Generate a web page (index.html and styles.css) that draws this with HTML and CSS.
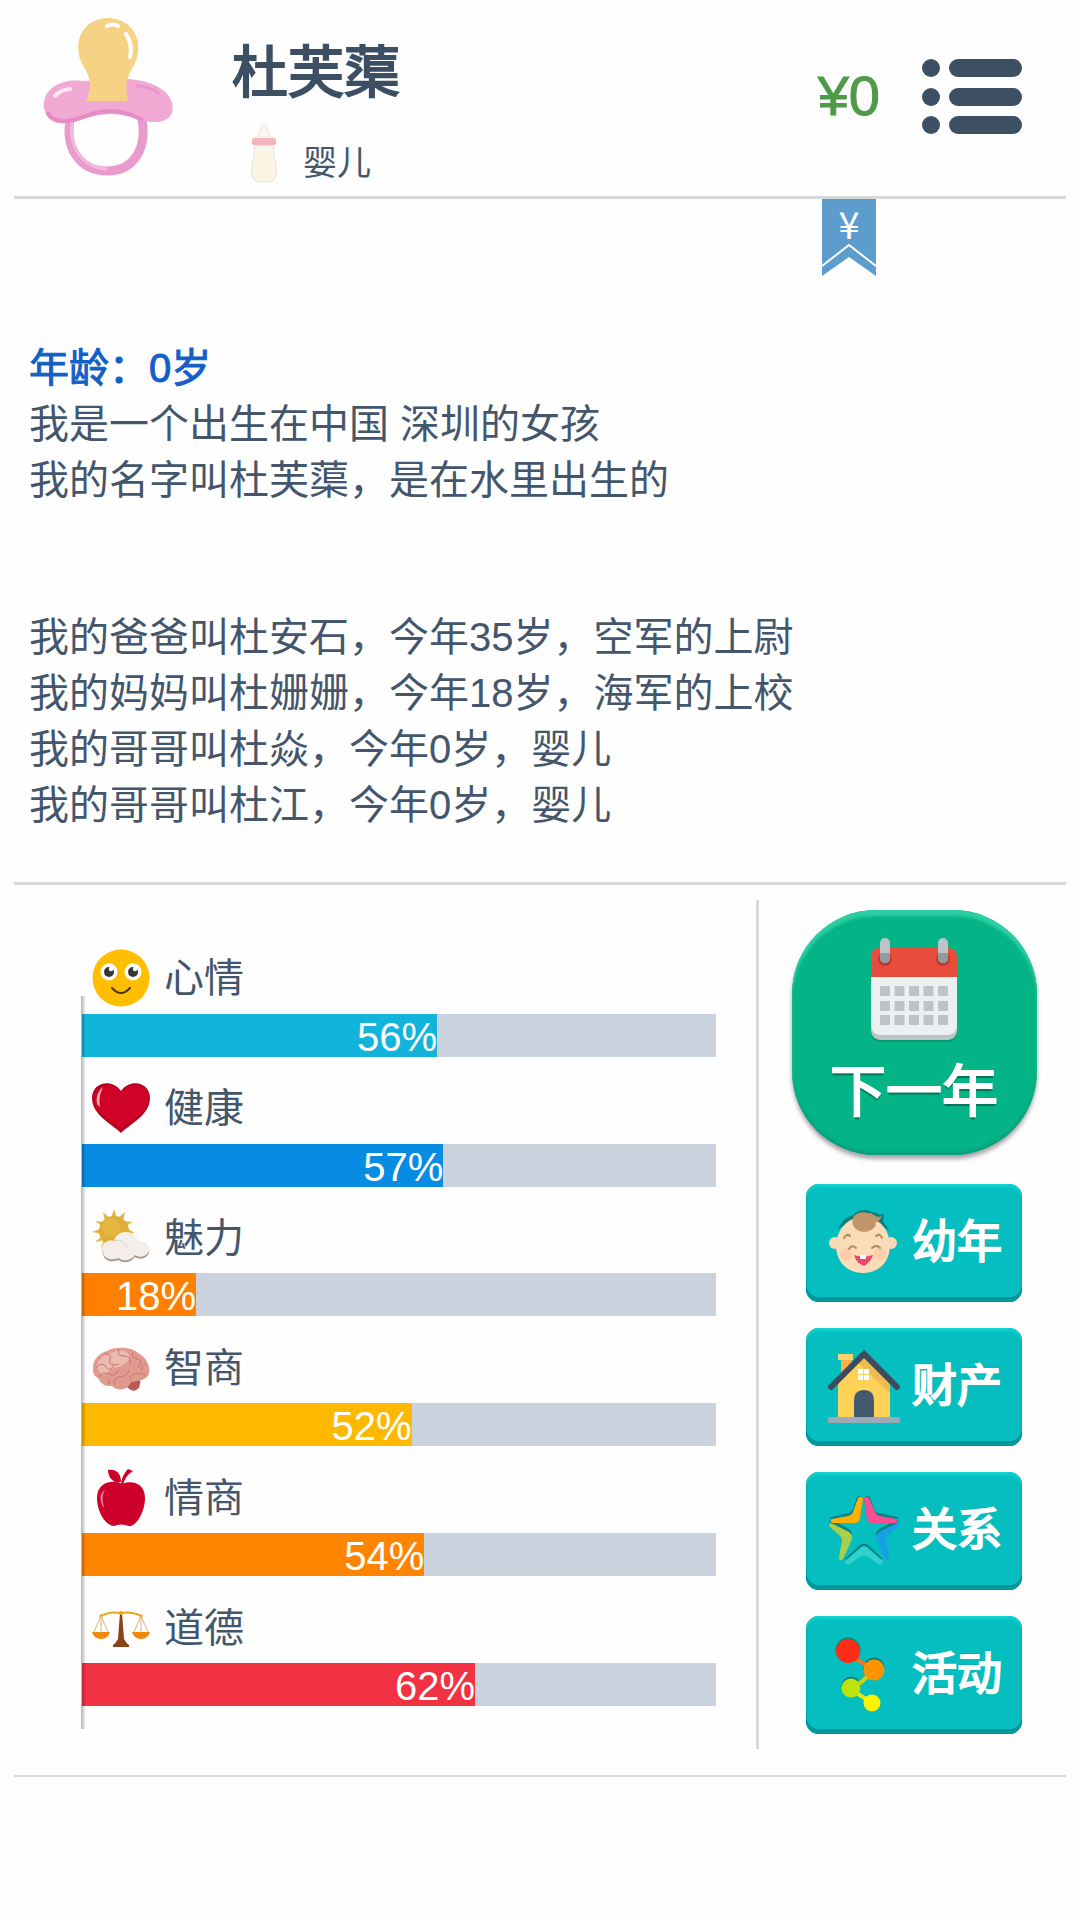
FILE: index.html
```html
<!DOCTYPE html>
<html lang="zh-CN">
<head>
    <meta charset="utf-8">
    <meta name="viewport" content="width=device-width, initial-scale=1">
    <title>杜芙蕖</title>
    <link rel="stylesheet" href="styles.css">
</head>
<body>
    <header class="top">
        <svg class="avatar" viewBox="0 0 132 158" aria-hidden="true">
            <path d="M28 98C20 132 38 154 64 154S106 132 98 98" fill="none" stroke="#e99bcb" stroke-width="9"/>
            <path d="M30 101C23 130 41 151 64 152" fill="none" stroke="#f2b9da" stroke-width="3"/>
            <path d="M40 64C22 61 3 69 1 85C-2 100 16 107 34 104C48 100 56 97 68 97C84 97 94 103 108 105C125 106 132 98 129 86C126 73 108 63 84 62Z" fill="#efa9d2"/>
            <path d="M4 95C9 105 20 106 34 102C48 97 56 94 68 94C84 94 92 100 100 103" fill="none" stroke="#e68bc4" stroke-width="4"/>
            <path d="M43 84C50 68 46 59 42 52C29 33 34 2 65 1C94 2 102 30 90 50C83 63 82 68 85 84Z" fill="#f5d284"/>
            <path d="M64 9Q70 6 75 9M83 17Q90 27 87 40" fill="none" stroke="#fff" stroke-width="4" stroke-linecap="round"/>
            <path d="M12 79Q17 73 27 72" fill="none" stroke="#fbe6f3" stroke-width="4" stroke-linecap="round"/>
            <path d="M94 69Q106 69 115 76" fill="none" stroke="#e899cb" stroke-width="3" stroke-linecap="round"/>
        </svg>
        <div class="who">
            <h1 class="name">杜芙蕖</h1>
            <div class="stage">
                <svg class="bottle" viewBox="0 0 26 58" aria-hidden="true">
                    <path d="M10 1Q13-1 16 1L17 7L22 14H4L9 7Z" fill="#faf5f0" stroke="#ece4dd"/>
                    <path d="M3 20C5 31-2 44 2 53Q4 57 13 57T24 53C28 44 21 31 23 20Z" fill="#fbf5ec" stroke="#e9dfd5"/>
                    <path d="M5 26H21C20 36 25 46 22 52Q13 56 4 52C1 46 6 36 5 26Z" fill="#fcf3e2"/>
                    <rect x="1" y="13" width="24" height="7" rx="2" fill="#f5b5be"/>
                </svg>
                <span>婴儿</span>
            </div>
        </div>
        <div class="money">¥0</div>
        <button class="menu" type="button" aria-label="菜单">
            <svg viewBox="0 0 100 75" fill="#3d4f63">
                <circle cx="9" cy="9" r="9"/><rect x="27" width="73" height="18" rx="9"/>
                <circle cx="9" cy="38" r="9"/><rect x="27" y="29" width="73" height="18" rx="9"/>
                <circle cx="9" cy="66" r="9"/><rect x="27" y="57" width="73" height="18" rx="9"/>
            </svg>
        </button>
    </header>

    <main class="story">
        <button class="ribbon" type="button" aria-label="资金">
            <svg viewBox="0 0 54 77">
                <path d="M0 0H54V77L27 58L0 77Z" fill="#5d9dcd"/>
                <path d="M0 67L27 46L54 67" fill="none" stroke="#fff" stroke-width="2"/>
            </svg>
            <span>¥</span>
        </button>
        <h2 class="age">年龄：0岁</h2>
        <p>我是一个出生在中国 深圳的女孩</p>
        <p>我的名字叫杜芙蕖，是在水里出生的</p>
        <div class="family">
            <p>我的爸爸叫杜安石，今年35岁，空军的上尉</p>
            <p>我的妈妈叫杜姗姗，今年18岁，海军的上校</p>
            <p>我的哥哥叫杜焱，今年0岁，婴儿</p>
            <p>我的哥哥叫杜江，今年0岁，婴儿</p>
        </div>
    </main>

    <section class="panel">
        <ul class="stats">
            <li class="stat">
                <div class="label">
                    <svg viewBox="0 0 58 58" aria-hidden="true">
                        <circle cx="29" cy="29" r="28.5" fill="#ffbe00"/>
                        <circle cx="17" cy="23" r="8.5" fill="#fff"/><circle cx="41" cy="23" r="8.5" fill="#fff"/>
                        <circle cx="17" cy="23" r="5" fill="#3a3532"/><circle cx="41" cy="23" r="5" fill="#3a3532"/>
                        <circle cx="19" cy="20" r="2.2" fill="#fff"/><circle cx="43" cy="20" r="2.2" fill="#fff"/>
                        <path d="M20 39Q29 49 38 39" fill="none" stroke="#4b3517" stroke-width="2" stroke-linecap="round"/>
                    </svg>
                    <span>心情</span>
                </div>
                <div class="track"><div class="fill sky" style="width:56%">56%</div></div>
            </li>
            <li class="stat">
                <div class="label">
                    <svg viewBox="0 0 58 58" aria-hidden="true">
                        <path d="M29 54C20 45 0 36 0 19C0 3 20-1 29 12C38-1 58 3 58 19C58 36 38 45 29 54Z" fill="#b80222"/>
                        <path d="M29 50C20 41 2 34 2 19C2 6 21 2 29 14C37 2 56 6 56 19C56 34 38 41 29 50Z" fill="#cf0327"/>
                        <path d="M5 25Q3 14 11 8Q6 18 8 28Z" fill="#eeb0b9"/>
                    </svg>
                    <span>健康</span>
                </div>
                <div class="track"><div class="fill blue" style="width:57%">57%</div></div>
            </li>
            <li class="stat">
                <div class="label">
                    <svg viewBox="0 0 58 58" aria-hidden="true">
                        <path d="M22 0L25 9H19ZM33 3L31 12L26 9ZM41 13L34 17L31 12ZM43 24L34 25V19ZM11 3L18 9L13 12ZM3 12L13 13L10 17ZM0 23L10 19V25ZM3 33L10 27L13 31ZM9 39L12 30L17 33Z" fill="#e2b84a"/>
                        <circle cx="22" cy="22" r="15" fill="#dfae36"/>
                        <circle cx="19" cy="18" r="9" fill="#ebc04a" opacity=".5"/>
                        <path d="M11 45C8 38 14 31 22 33C24 22 42 20 46 33C54 32 60 40 56 46C52 51 46 50 43 48C38 55 30 54 27 51C20 54 12 52 11 45Z" fill="#a99a93"/>
                        <path d="M11 43C8 36 14 30 22 32C24 21 42 19 46 32C54 31 60 39 56 44C52 49 46 48 43 46C38 53 30 52 27 49C20 52 12 50 11 43Z" fill="#f3eeea"/>
                        <path d="M22 32Q31 29 36 39" fill="none" stroke="#ded5cf"/>
                    </svg>
                    <span>魅力</span>
                </div>
                <div class="track"><div class="fill orange" style="width:18%">18%</div></div>
            </li>
            <li class="stat">
                <div class="label">
                    <svg viewBox="0 0 58 58" aria-hidden="true">
                        <path d="M32 42L48 38Q50 50 42 52Q34 50 32 42Z" fill="#b95a50"/>
                        <path d="M1 31C0 20 8 14 15 12C24 7 40 8 46 14C54 18 59 27 57 35C54 42 45 42 39 43C36 51 26 53 20 47C10 48 8 42 6 39Q1 37 1 31Z" fill="#e09a90"/>
                        <path d="M5 28C5 20 14 14 22 13C32 9 40 14 36 22C30 30 20 27 16 33S7 34 5 28Z" fill="#edbab1"/>
                        <path d="M4 29Q10 22 14 28T22 26M13 15Q20 14 18 21T27 25M27 10Q24 17 32 17T38 25M41 13Q38 18 45 20T46 29M54 25Q49 26 50 32M8 38Q10 32 17 35T26 31M23 46Q20 39 28 38T37 31M39 42Q36 37 42 35T54 36M17 45Q19 42 15 40" fill="none" stroke="#c4776c"/>
                    </svg>
                    <span>智商</span>
                </div>
                <div class="track"><div class="fill amber" style="width:52%">52%</div></div>
            </li>
            <li class="stat">
                <div class="label">
                    <svg viewBox="0 0 58 58" aria-hidden="true">
                        <path d="M30 15C38 11 53 13 53 29C53 43 44 58 37 57Q29 54 22 57C14 57 5 43 5 29C5 13 21 10 30 15Z" fill="#cd002b"/>
                        <path d="M16 1C25 0 29 5 29 13C22 15 16 9 16 1ZM29 15Q30 6 36 0L41 2Q33 7 31 16Z" fill="#cd002b"/>
                        <path d="M11 38Q5 26 13 21Q9 28 12 38Z" fill="#e67488"/>
                    </svg>
                    <span>情商</span>
                </div>
                <div class="track"><div class="fill tangerine" style="width:54%">54%</div></div>
            </li>
            <li class="stat">
                <div class="label">
                    <svg viewBox="0 0 58 58" aria-hidden="true">
                        <path d="M28 14H30L32 40Q34 44 37 46V48H21V46Q24 44 26 40Z" fill="#8b4117"/>
                        <path d="M9 17Q18 12 29 14Q40 12 49 17" fill="none" stroke="#eba51b" stroke-width="2"/>
                        <circle cx="29" cy="14" r="2" fill="#eba51b"/><circle cx="9" cy="17" r="1.8" fill="#eba51b"/><circle cx="49" cy="17" r="1.8" fill="#eba51b"/>
                        <path d="M9 17V33M9 17L2 33M9 17L16 33M49 17V33M49 17L42 33M49 17L56 33" stroke="#dcb27e"/>
                        <path d="M0 33H18Q16 40 9 40T0 33ZM40 33H58Q56 40 49 40T40 33Z" fill="#ee8a0b"/>
                    </svg>
                    <span>道德</span>
                </div>
                <div class="track"><div class="fill red" style="width:62%">62%</div></div>
            </li>
        </ul>

        <nav class="actions">
            <button class="next" type="button">
                <svg viewBox="0 0 88 104" aria-hidden="true">
                    <rect x="1" y="14" width="86" height="90" rx="9" fill="#05875f" opacity=".6"/>
                    <rect x="1" y="20" width="86" height="82" rx="9" fill="#bdc3c7"/>
                    <rect x="1" y="14" width="86" height="83" rx="9" fill="#ecf0f1"/>
                    <path d="M1 39V19Q1 10 10 10H78Q87 10 87 19V39Z" fill="#e84c3d"/>
                    <circle cx="15" cy="21" r="7" fill="#bf3a2c"/><circle cx="73" cy="21" r="7" fill="#bf3a2c"/>
                    <rect x="10" width="10" height="25" rx="5" fill="#bdc3c7"/><rect x="68" width="10" height="25" rx="5" fill="#bdc3c7"/>
                    <path d="M10 15H20V20Q20 25 15 25T10 20ZM68 15H78V20Q78 25 73 25T68 20Z" fill="#8f9b9c"/>
                    <path d="M10 53H78M10 68H78M10 82H78" stroke="#bdc3c7" stroke-width="10" stroke-dasharray="10 4.5"/>
                </svg>
                <span>下一年</span>
            </button>
            <button class="action" type="button">
                <svg viewBox="0 0 72 72" aria-hidden="true">
                    <path d="M10 22C15 12 22 8 25 9C27 3 38 2 45 5C50 6 50 9 56 7L55 15L62 24L50 16H20Z" fill="#0a7d76"/>
                    <circle cx="7" cy="36" r="6" fill="#fbd9b4"/><circle cx="63" cy="36" r="6" fill="#fbd9b4"/>
                    <path d="M35 10C52 10 61 23 62 38C62 56 50 66 35 66S8 56 8 38C9 23 19 10 35 10Z" fill="#fbdcb8"/>
                    <circle cx="18" cy="47" r="6" fill="#fbcdaa"/><circle cx="52" cy="47" r="6" fill="#fbcdaa"/>
                    <path d="M25 18C22 8 31 3 40 6C48 6 46 12 54 9C51 16 45 15 48 18C42 28 28 26 25 18Z" fill="#c1946a"/>
                    <path d="M16 31Q19 26 22 29M48 29Q52 26 54 31M21 42Q24 37 28 41M44 41Q49 37 52 41" fill="none" stroke="#b38a5e" stroke-width="2" stroke-linecap="round"/>
                    <path d="M26 48Q35 51 45 48Q43 55 36 59Q28 56 26 48Z" fill="#e9486b"/>
                    <path d="M32 48H38V52H32Z" fill="#fff"/>
                </svg>
                <span>幼年</span>
            </button>
            <button class="action" type="button">
                <svg viewBox="0 0 72 72" aria-hidden="true">
                    <path d="M13 8H24V28H13Z" fill="#f5b04c"/><path d="M10 3H25V9H10Z" fill="#fed069"/>
                    <path d="M10 32L36 6L62 32V66H10Z" fill="#fed159"/><path d="M36 6L62 32V42L30 12Z" fill="#edbc51"/>
                    <path d="M3 36L36 3L69 36" fill="none" stroke="#3d4b5c" stroke-width="6" stroke-linecap="round"/>
                    <path d="M26 66V50Q26 39 36 39T46 50V66Z" fill="#435b6f"/>
                    <path d="M30 18H35V23H30ZM36 18H41V23H36ZM30 24H35V29H30ZM36 24H41V29H36Z" fill="#fff"/>
                    <path d="M0 66H72V72H0Z" fill="#9aaab7"/>
                </svg>
                <span>财产</span>
            </button>
            <button class="action" type="button">
                <svg viewBox="0 0 72 72" aria-hidden="true">
                    <g id="star-shade" fill="#078386">
                        <path d="M29 2Q34-1 35 4L32 24H4Q0 24 3 22L20 18Q24 17 25 14Z"/>
                        <path d="M42 2Q37-1 36 4L39 24H68Q72 24 69 22L51 18Q47 17 46 14Z"/>
                        <path d="M1 26L4 25L21 34Q25 37 24 40L22 45L12 38Z"/>
                        <path d="M71 26L68 25L51 34Q47 37 48 40L50 45L60 38Z"/>
                        <path d="M17 64L32 50Q36 47 40 50L55 64L48 66L36 56L24 66Z"/>
                    </g>
                    <path d="M30 3Q34 0 35 4L32 24Q31 28 27 28H5Q1 27 4 24L20 21Q24 20 25 17Z" fill="#ffb003"/>
                    <path d="M41 3Q37 0 36 4L39 24Q40 28 44 28H67Q71 27 68 24L52 21Q48 20 47 17Z" fill="#fb4d91"/>
                    <path d="M1 31Q1 27 5 29L21 37Q25 40 24 44L15 64Q11 67 11 62L14 46Q14 42 11 40Z" fill="#a9cf4b"/>
                    <path d="M71 31Q71 27 67 29L51 37Q47 40 48 44L57 64Q61 67 61 62L58 46Q58 42 61 40Z" fill="#179fe2"/>
                    <path d="M17 66L32 53Q36 49 40 53L55 66Q54 70 50 69L40 62Q36 59 32 62L22 69Q17 71 17 66Z" fill="#2ed1cb"/>
                </svg>
                <span>关系</span>
            </button>
            <button class="action" type="button">
                <svg viewBox="0 0 72 72" aria-hidden="true">
                    <circle cx="20" cy="11" r="12.5" fill="#0a8174"/><circle cx="46" cy="29" r="10.5" fill="#0a8174"/><circle cx="23" cy="47" r="9.5" fill="#0a8174"/>
                    <path d="M26 18Q34 24 46 31" fill="none" stroke="#fe721a" stroke-width="4"/><path d="M43 33Q35 44 23 49" fill="none" stroke="#c7d605" stroke-width="4"/><path d="M24 51L44 64" stroke="#e4ee05" stroke-width="4"/>
                    <circle cx="20" cy="12" r="12" fill="#fe2c18"/><circle cx="46" cy="31" r="10.5" fill="#ff9400"/>
                    <circle cx="23" cy="49" r="9.5" fill="#bce30c"/><circle cx="44" cy="64" r="8.5" fill="#fff400"/>
                </svg>
                <span>活动</span>
            </button>
        </nav>
    </section>
</body>
</html>
```
FILE: styles.css
```css
* {
    box-sizing: border-box;
    margin: 0;
    padding: 0;
}
body {
    margin: 0 14px;
    background: #fefefe;
    color: #44566c;
    font-family: "Liberation Sans", "Noto Sans CJK SC", sans-serif;
    font-size: 40px;
    line-height: 56px;
}
button {
    border: 0;
    background: none;
    color: #fff;
    font: inherit;
    cursor: pointer;
}
svg {
    display: block;
    overflow: visible;
}

/* header */
.top {
    display: flex;
    align-items: flex-start;
    padding: 9px 44px 13px 29px;
    border-bottom: 3px solid #d9d9d9;
}
.avatar {
    width: 132px;
    height: 158px;
    margin-top: 8px;
}
.who {
    flex: 1;
    padding: 28px 0 0 57px;
}
.name {
    color: #3d4f63;
    font-size: 56px;
    font-weight: normal;
    line-height: 72px;
    -webkit-text-stroke: 2px #3d4f63;
}
.stage {
    display: flex;
    align-items: flex-end;
    gap: 26px;
    margin-top: 16px;
    padding-left: 19px;
    font-size: 34px;
    line-height: 40px;
}
.bottle {
    width: 26px;
    height: 58px;
}
.money {
    align-self: center;
    color: #4f9a48;
    font-size: 56px;
    -webkit-text-stroke: 1px #4f9a48;
}
.menu {
    align-self: center;
    margin-left: 42px;
}
.menu svg {
    width: 100px;
    height: 75px;
}

/* life story */
.story {
    position: relative;
    padding: 141px 15px 49px;
    border-bottom: 3px solid #d7d8dc;
}
.ribbon {
    position: absolute;
    top: 0;
    right: 190px;
    width: 54px;
}
.ribbon span {
    position: absolute;
    top: 0;
    left: 0;
    width: 100%;
    font-family: "Noto Sans CJK SC", sans-serif;
    font-size: 38px;
    line-height: 48px;
    text-align: center;
}
.age {
    color: #145fc6;
    font-size: 40px;
    font-weight: normal;
    -webkit-text-stroke: 1px #145fc6;
}
.family {
    margin-top: 101px;
}

/* stats and buttons */
.panel {
    display: flex;
    border-bottom: 2px solid #d9d9d9;
}
.stats {
    position: relative;
    display: flex;
    flex: 1;
    flex-direction: column;
    padding: 42px 40px 69px 68px;
    list-style: none;
}
.stats::after {
    content: "";
    position: absolute;
    top: 111px;
    bottom: 46px;
    left: 67px;
    width: 5px;
    background: linear-gradient(to right, rgba(0, 0, 0, .3), rgba(0, 0, 0, 0));
}
.stat {
    display: flex;
    flex: 1;
    flex-direction: column;
}
.label {
    display: flex;
    flex: 1;
    align-items: center;
    gap: 14px;
    padding: 16px 0 0 10px;
}
.label svg {
    width: 58px;
    height: 58px;
}
.track {
    background: #c9d2dd;
}
.fill {
    height: 43px;
    color: #fff;
    line-height: 46px;
    text-align: right;
}
.sky { background: #12b4dc; }
.blue { background: #088be3; }
.orange { background: #ff7f00; }
.amber { background: #ffb800; }
.tangerine { background: #ff8500; }
.red { background: #f23142; }

.actions {
    display: flex;
    flex-direction: column;
    align-items: center;
    gap: 26px;
    width: 310px;
    margin: 15px 0 26px;
    padding: 10px 0 15px 3px;
    border-left: 3px solid #d7d8dc;
}
.next {
    display: flex;
    flex-direction: column;
    align-items: center;
    gap: 10px;
    width: 245px;
    height: 245px;
    margin-bottom: 3px;
    padding-top: 28px;
    border-radius: 84px;
    background: #04b386;
    box-shadow: inset 0 6px 3px #2bcfa3, inset 0 -3px 3px #08a07c, 0 4px 4px #a9a3aa;
    font-size: 56px;
    line-height: 80px;
    text-shadow: 0 3px 1px #067356;
    -webkit-text-stroke: 2px #fff;
}
.next svg {
    width: 88px;
    height: 104px;
}
.action {
    display: flex;
    align-items: center;
    gap: 12px;
    width: 216px;
    height: 118px;
    padding-left: 22px;
    border-radius: 13px;
    background: #05bec0;
    box-shadow: inset 0 -5px 0 #05959a, inset 0 3px 3px #12d5d3, inset 0 0 2px 1px #078e92;
    font-size: 45px;
    line-height: 60px;
    text-shadow: 0 -1px 1px #056062;
    -webkit-text-stroke: 2px #fff;
}
.action svg {
    width: 72px;
    height: 72px;
}
```
